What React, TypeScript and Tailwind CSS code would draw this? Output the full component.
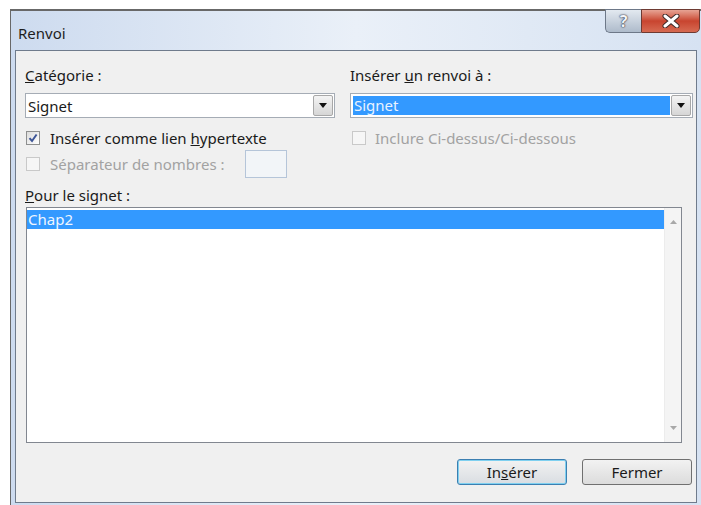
import React from "react";

const font = "font-['Noto_Sans','DejaVu_Sans',sans-serif]";

function DropArrow() {
    return (
        <div className="w-[20px] h-[21px] border border-[#a8a8a8] rounded-[2px] bg-gradient-to-b from-[#f4f4f4] to-[#d6d6d6] flex items-center justify-center">
            <svg width="8" height="5" viewBox="0 0 8 5">
                <path d="M0 0 L8 0 L4 5 Z" fill="#111" />
            </svg>
        </div>
    );
}

function Checkbox({ checked, disabled }: { checked?: boolean; disabled?: boolean }) {
    return (
        <div
            className={
                disabled
                    ? "w-[14px] h-[14px] border border-[#c9c9c9] bg-[#f6f6f6]"
                    : "w-[14px] h-[14px] border border-[#8e8f8f] bg-gradient-to-br from-[#dcdcdc] to-[#ffffff] flex items-center justify-center"
            }
        >
            {checked && (
                <svg width="10" height="10" viewBox="0 0 10 10">
                    <path d="M1.5 5.2 L4 8 L8.6 1.5" fill="none" stroke="#3d5597" strokeWidth="2" />
                </svg>
            )}
        </div>
    );
}

export default function App() {
    return (
        <div className={`w-[701px] h-[505px] bg-white pt-[9px] pl-[10px] overflow-hidden ${font}`}>
            <div className="h-full flex flex-col border-t-2 border-l border-[#686868] bg-gradient-to-r from-[#cddbef] via-[#eaf0f8] to-[#d6e2f2]">
                {/* title bar */}
                <div className="h-[39px] flex items-start">
                    <span className="pl-[7px] pt-[12px] text-[15px] leading-[20px] text-[#1e1e1e]">Renvoi</span>
                    <div className="ml-auto -mt-[2px] mr-[1px] flex">
                        <div className="w-[36px] h-[24px] border border-[#6d7888] border-r-0 rounded-bl-[5px] bg-gradient-to-b from-[#e3e9f0] to-[#aebbcb] flex items-center justify-center">
                            <span className="text-[16px] leading-none font-bold text-[#f4f6f9] [text-shadow:0_0_2px_#223,0_0_1px_#223]">?</span>
                        </div>
                        <div className="w-[59px] h-[24px] border border-[#6e3a32] rounded-br-[5px] bg-gradient-to-b from-[#e6a394] via-[#c8442f] to-[#d66a52] flex items-center justify-center">
                            <svg width="18" height="14" viewBox="0 0 18 14">
                                <path d="M3 2 L15 12 M15 2 L3 12" stroke="#3d2a28" strokeWidth="5" strokeLinecap="round" />
                                <path d="M3 2 L15 12 M15 2 L3 12" stroke="#ffffff" strokeWidth="3" strokeLinecap="round" />
                            </svg>
                        </div>
                    </div>
                </div>

                {/* dialog body */}
                <div className="flex-1 ml-[4px] mr-[4px] mb-[2px] border border-[#6f7b8c] bg-[#f0f0f0] text-[15px] leading-[20px] text-[#1a1a1a] flex flex-col pt-[14px]">
                    <div className="flex pl-[9px] gap-[15px]">
                        <div className="w-[310px] flex flex-col">
                            <span><span className="underline">C</span>atégorie :</span>
                            <div className="mt-[8px] h-[25px] border border-[#a5acb5] bg-white flex items-center pl-[2px] pr-[1px]">
                                <span className="flex-1">Signet</span>
                                <DropArrow />
                            </div>
                            <div className="mt-[10px] flex items-center gap-[10px] pl-[1px]">
                                <Checkbox checked />
                                <span>Insérer comme lien <span className="underline">h</span>ypertexte</span>
                            </div>
                            <div className="mt-[2px] h-[28px] flex items-center pl-[1px]">
                                <Checkbox disabled />
                                <span className="ml-[10px] text-[#a2a2a2]">Séparateur de nombres :</span>
                                <div className="ml-[20px] w-[42px] h-[28px] border border-[#b5c5d9] bg-[#f2f5f8]" />
                            </div>
                        </div>
                        <div className="w-[343px] flex flex-col">
                            <span>Insérer <span className="underline">u</span>n renvoi à :</span>
                            <div className="mt-[8px] h-[25px] border border-[#a5acb5] bg-white flex items-center pl-[2px] pr-[1px]">
                                <span className="flex-1 mr-[1px] h-[19px] leading-[19px] bg-[#3399ff] text-[#e8f2ff] pl-[1px]">Signet</span>
                                <DropArrow />
                            </div>
                            <div className="mt-[10px] flex items-center gap-[9px] pl-[2px]">
                                <Checkbox disabled />
                                <span className="text-[#a2a2a2]">Inclure Ci-dessus/Ci-dessous</span>
                            </div>
                        </div>
                    </div>

                    <span className="pl-[9px] mt-[7px]"><span className="underline">P</span>our le signet :</span>

                    <div className="ml-[10px] mt-[2px] w-[656px] h-[236px] border border-[#828790] bg-white flex">
                        <div className="flex-1 pt-[2px]">
                            <div className="h-[19px] leading-[19px] bg-[#3399ff] text-[#eef5ff] pl-[1px]">Chap2</div>
                        </div>
                        <div className="w-[17px] bg-[#f4f4f4] border-l border-[#ececec] flex flex-col items-center justify-between py-[12px]">
                            <svg width="7" height="4" viewBox="0 0 7 4">
                                <path d="M0 4 L7 4 L3.5 0 Z" fill="#a8a8a8" />
                            </svg>
                            <svg width="7" height="4" viewBox="0 0 7 4">
                                <path d="M0 0 L7 0 L3.5 4 Z" fill="#a8a8a8" />
                            </svg>
                        </div>
                    </div>

                    <div className="mt-[16px] flex justify-end gap-[15px] pr-[4px]">
                        <button className="w-[110px] h-[26px] rounded-[3px] border border-[#3c7fb1] shadow-[inset_0_0_0_1px_#7fd0f0] bg-gradient-to-b from-[#f2f2f2] to-[#d9dde2] text-[15px]">
                            In<span className="underline">s</span>érer
                        </button>
                        <button className="w-[110px] h-[26px] rounded-[3px] border border-[#707070] bg-gradient-to-b from-[#f2f2f2] to-[#dcdcdc] text-[15px]">
                            Fermer
                        </button>
                    </div>
                </div>
            </div>
        </div>
    );
}
